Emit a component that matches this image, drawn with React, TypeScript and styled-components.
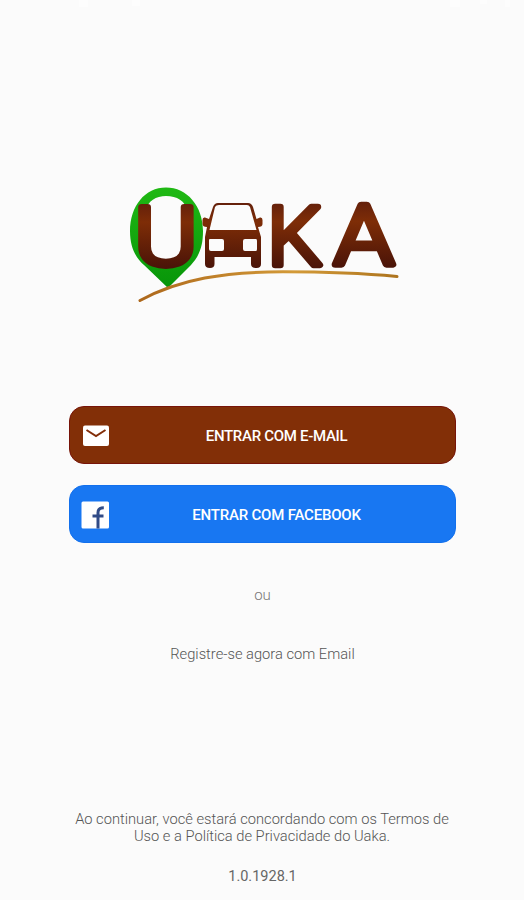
import React from 'react';
import styled, { createGlobalStyle } from 'styled-components';

const GlobalStyle = createGlobalStyle`
  * { box-sizing: border-box; }
  body { margin: 0; background: #fbfbfb; }
`;

const Screen = styled.main`
  display: flex;
  flex-direction: column;
  align-items: center;
  width: 524px;
  height: 900px;
  overflow: hidden;
  background: #fbfbfb;
  font-family: Roboto, sans-serif;
`;

const StatusBar = styled.svg`
  display: block;
  width: 524px;
  height: 20px;
  flex: none;
`;

const Logo = styled.svg`
  display: block;
  width: 290px;
  height: 130px;
  margin-top: 160px;
  flex: none;
`;

const Actions = styled.section`
  display: flex;
  flex-direction: column;
  gap: 21px;
  width: 387px;
  margin-top: 96.4px;
`;

const SignInButton = styled.button<{ $fill: string; $edge: string }>`
  display: grid;
  grid-template-columns: 28px 1fr;
  align-items: center;
  height: 58px;
  padding: 2px 0 0 11px;
  border: 1px solid ${(p) => p.$edge};
  border-radius: 15px;
  background: ${(p) => p.$fill};
  color: #fff;
`;

const ButtonIcon = styled.svg`
  display: block;
  width: 28px;
  height: 28px;
`;

const ButtonLabel = styled.span<{ $spacing: string }>`
  padding-right: 10px;
  font: 500 15px/20px Roboto, sans-serif;
  letter-spacing: ${(p) => p.$spacing};
  text-align: center;
  white-space: nowrap;
`;

const Separator = styled.p`
  margin: 41.6px 0 0;
  padding-left: 1px;
  font-size: 15px;
  line-height: 20px;
  font-weight: 300;
  color: #777;
`;

const RegisterLink = styled.a`
  margin-top: 39px;
  padding-left: 1px;
  font-size: 14.7px;
  line-height: 20px;
  font-weight: 300;
  color: #555;
`;

const Footer = styled.footer`
  display: flex;
  flex-direction: column;
  align-items: center;
  margin-top: 147px;
`;

const Terms = styled.p`
  margin: 0;
  font-size: 14.7px;
  line-height: 17px;
  font-weight: 300;
  color: #555;
  text-align: center;
  white-space: nowrap;
`;

const Version = styled.span`
  margin-top: 23px;
  padding-left: 1px;
  font-size: 14.5px;
  line-height: 18px;
  color: #666;
`;

function UakaLogo() {
  return (
    <Logo viewBox="117 180 290 130" role="img" aria-label="Uaka">
      <defs>
        <linearGradient id="wood" gradientUnits="userSpaceOnUse" x1="0" y1="-62" x2="0" y2="2">
          <stop offset="0" stopColor="#64200b" />
          <stop offset="0.3" stopColor="#7e2d07" />
          <stop offset="1" stopColor="#4b1408" />
        </linearGradient>
        <linearGradient id="pin" x1="0" y1="0" x2="0" y2="1">
          <stop offset="0" stopColor="#20b914" />
          <stop offset="1" stopColor="#079509" />
        </linearGradient>
        <linearGradient id="road" x1="0" y1="0" x2="1" y2="0">
          <stop offset="0" stopColor="#ad681c" />
          <stop offset="0.6" stopColor="#d39a38" />
          <stop offset="1" stopColor="#ad741e" />
        </linearGradient>
      </defs>
      <path
        fill="url(#pin)"
        fillRule="evenodd"
        d="M166 187.500C145 187.500 130 206 130 231C130 248 136 258 144 265L168 288L191 265C199 256 203 247 203 231C203 206 187 187.500 166 187.500ZM166 196C177 196 185 201 188 211V248L179 260H154L145 248V211C148 201 156 196 166 196Z"
      />
      <path d="M140 300.500C180 279 225 271.800 283 271.800C325 271.800 360 273 397 276.500" fill="none" stroke="url(#road)" strokeWidth="3" strokeLinecap="round" />
      <g fill="url(#wood)" stroke="url(#wood)" strokeLinejoin="round" fontFamily="Roboto, sans-serif">
        <text transform="translate(134 265) scale(1.180 1)" fontSize="82" fontWeight="300" strokeWidth="6">U</text>
        <text transform="translate(267.500 264.500) scale(1.040 1)" fontSize="82" fontWeight="300" strokeWidth="6.500">K</text>
        <text transform="translate(334 264.500) scale(1.170 1.010)" fontSize="82" fontWeight="300" strokeWidth="6.500">A</text>
      </g>
      <g transform="translate(0 265)">
        <path
          fill="url(#wood)"
          fillRule="evenodd"
          d="M218 -62H248Q251.500 -62 253 -58L256.500 -46L260 -47.500Q262.500 -48 262.500 -45V-41Q262.500 -38 258 -38L261 -28V-1Q261 3 256.500 3Q251 3 251 -1V-8H214.500V-1Q214.500 3 210 3Q205 3 205 -1V-28L207 -38Q202.500 -38 202.500 -41V-45Q202.500 -48 205 -47.500L209 -46L213 -58Q214.500 -62 218 -62ZM219 -60Q216 -60 215 -58L209.500 -35H256.500L250 -58Q249 -60 247 -60ZM210 -26Q209 -26 209 -25V-16Q209 -14 211 -14H222Q224 -14 224 -16V-24Q224 -26 222 -26ZM245 -26Q243 -26 243 -24V-16Q243 -14 245 -14H256Q257 -14 257 -16V-24Q257 -26 256 -26Z"
        />
      </g>
    </Logo>
  );
}

function MailIcon() {
  return (
    <ButtonIcon viewBox="0 0 28 28" aria-hidden="true">
      <rect x="2" y="3.500" width="26" height="20.500" rx="2" fill="#fff" />
      <path d="M5.500 8L15 14L24.500 8" fill="none" stroke="#822d08" strokeWidth="2" />
    </ButtonIcon>
  );
}

function FacebookIcon() {
  return (
    <ButtonIcon viewBox="0 0 28 28" aria-hidden="true">
      <rect x="0.500" y="0.500" width="27.500" height="27" rx="1.500" fill="#fff" />
      <path d="M17 27.500V11.500Q17 6.700 22.800 6.700M11.500 15H22.500" fill="none" stroke="#304b87" strokeWidth="3" />
    </ButtonIcon>
  );
}

export default function App() {
  return (
    <>
      <GlobalStyle />
      <Screen>
        <StatusBar viewBox="0 0 524 20" aria-hidden="true">
          <path d="M79 0H88V7H79ZM132 0H140V6H132ZM450 0H460V7H450ZM480 0H487V4H480ZM505 0H510V7H505Z" fill="#fff" opacity="0.5" />
        </StatusBar>
        <UakaLogo />
        <Actions>
          <SignInButton $fill="#822f07" $edge="#771409">
            <MailIcon />
            <ButtonLabel $spacing="-0.3px">ENTRAR COM E-MAIL</ButtonLabel>
          </SignInButton>
          <SignInButton $fill="#1877f2" $edge="#1270ed">
            <FacebookIcon />
            <ButtonLabel $spacing="-0.2px">ENTRAR COM FACEBOOK</ButtonLabel>
          </SignInButton>
        </Actions>
        <Separator>ou</Separator>
        <RegisterLink>Registre-se agora com Email</RegisterLink>
        <Footer>
          <Terms>
            Ao continuar, você estará concordando com os Termos de
            <br />
            Uso e a Política de Privacidade do Uaka.
          </Terms>
          <Version>1.0.1928.1</Version>
        </Footer>
      </Screen>
    </>
  );
}
